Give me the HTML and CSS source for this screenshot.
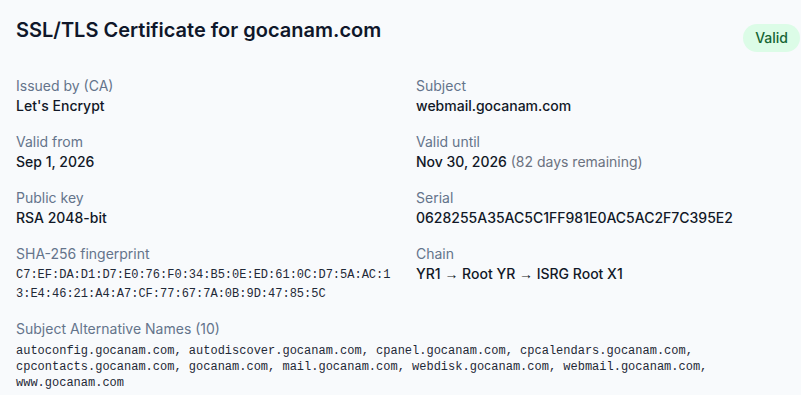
FILE: index.html
```html
<!DOCTYPE html>
<html lang="en">
<head>
<meta charset="utf-8">
<title>SSL/TLS Certificate</title>
<link rel="stylesheet" href="styles.css">
</head>
<body>
<section class="card">
  <header class="card-header">
    <h1 class="title">SSL/TLS Certificate for gocanam.com</h1>
    <span class="badge">Valid</span>
  </header>
  <div class="grid">
    <div class="field">
      <div class="label">Issued by (CA)</div>
      <div class="value">Let's Encrypt</div>
    </div>
    <div class="field">
      <div class="label">Subject</div>
      <div class="value">webmail.gocanam.com</div>
    </div>
    <div class="field">
      <div class="label">Valid from</div>
      <div class="value">Sep 1, 2026</div>
    </div>
    <div class="field">
      <div class="label">Valid until</div>
      <div class="value">Nov 30, 2026 <span class="muted">(82 days remaining)</span></div>
    </div>
    <div class="field">
      <div class="label">Public key</div>
      <div class="value">RSA 2048-bit</div>
    </div>
    <div class="field">
      <div class="label">Serial</div>
      <div class="value">0628255A35AC5C1FF981E0AC5AC2F7C395E2</div>
    </div>
    <div class="field">
      <div class="label">SHA-256 fingerprint</div>
      <div class="mono fingerprint">C7:EF:DA:D1:D7:E0:76:F0:34:B5:0E:ED:61:0C:D7:5A:AC:13:E4:46:21:A4:A7:CF:77:67:7A:0B:9D:47:85:5C</div>
    </div>
    <div class="field">
      <div class="label">Chain</div>
      <div class="value">YR1 <span class="arrow">→</span> Root YR <span class="arrow">→</span> ISRG Root X1</div>
    </div>
  </div>
  <div class="san">
    <div class="label">Subject Alternative Names (10)</div>
    <div class="mono san-list">autoconfig.gocanam.com, autodiscover.gocanam.com, cpanel.gocanam.com, cpcalendars.gocanam.com, cpcontacts.gocanam.com, gocanam.com, mail.gocanam.com, webdisk.gocanam.com, webmail.gocanam.com, www.gocanam.com</div>
  </div>
</section>
</body>
</html>
```
FILE: styles.css
```css
html, body {
  margin: 0;
  padding: 0;
  background: #f8fafc;
  overflow: hidden;
}
body {
  font-family: Inter, "Noto Sans", sans-serif;
  color: #111827;
}
.card {
  box-sizing: border-box;
  width: 816px;
  padding: 16px;
}
.card-header {
  display: flex;
  justify-content: space-between;
  align-items: flex-start;
  margin-bottom: 24px;
}
.title {
  margin: 0;
  font-size: 20px;
  line-height: 28px;
  font-weight: 600;
  color: #0f172a;
}
.badge {
  margin-top: 8px;
  height: 28px;
  line-height: 28px;
  padding: 0 12px;
  border-radius: 14px;
  background: #dcfce7;
  color: #166534;
  font-size: 14px;
  font-weight: 500;
}
.grid {
  display: grid;
  grid-template-columns: 1fr 1fr;
  column-gap: 16px;
  row-gap: 16px;
}
.label {
  font-size: 14px;
  line-height: 20px;
  color: #64748b;
}
.value {
  font-size: 14px;
  line-height: 20px;
  font-weight: 500;
  color: #111827;
}
.arrow {
  font-family: "Liberation Sans", sans-serif;
  font-weight: 400;
}
.muted {
  font-weight: 400;
  color: #6b7280;
}
.mono {
  font-family: "Liberation Mono", "DejaVu Sans Mono", monospace;
  font-size: 12px;
  color: #1f2937;
}
.fingerprint {
  margin-top: 2px;
  line-height: 19.2px;
  max-width: 378px;
  word-break: break-all;
}
.san {
  margin-top: 15px;
}
.san-list {
  margin-top: 4px;
  line-height: 16px;
}
```
